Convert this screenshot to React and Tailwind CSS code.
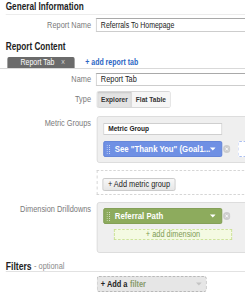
import React from "react";

function Grip() {
  return (
    <svg width="5" height="9" viewBox="0 0 5 9" className="shrink-0">
      {[0, 2, 4, 6, 8].map((y) => (
        <g key={y}>
          <rect x="0" y={y} width="1.2" height="1" fill="rgba(255,255,255,0.65)" />
          <rect x="3" y={y} width="1.2" height="1" fill="rgba(255,255,255,0.65)" />
        </g>
      ))}
    </svg>
  );
}

function Caret({ color = "#fff" }) {
  return (
    <svg width="7" height="4" viewBox="0 0 7 4" className="shrink-0">
      <path d="M0 0.5 L7 0.5 L3.5 3.5 Z" fill={color} />
    </svg>
  );
}

function RemoveDot() {
  return (
    <svg width="9" height="8" viewBox="0 0 9 8" className="shrink-0">
      <ellipse cx="4.5" cy="4" rx="4.5" ry="4" fill="#cdcdcd" />
      <path d="M3 2.6 L6 5.4 M6 2.6 L3 5.4" stroke="#fff" strokeWidth="1" />
    </svg>
  );
}

export default function App() {
  return (
    <div className="w-[245px] h-[300px] overflow-hidden bg-white">
      <div className="w-[299px] origin-top-left scale-x-[0.82] font-['Liberation_Sans',Arial,sans-serif] text-[9px] leading-none text-[#333]">
        {/* General Information */}
        <div className="h-[15px] ml-[7px] flex items-center border-b border-[#ececec]">
          <span className="font-bold text-[10px] text-[#222] whitespace-nowrap">General Information</span>
        </div>

        <div className="mt-[3px] flex items-center h-[14px]">
          <div className="w-[111px] shrink-0 text-right text-[#7a7a7a] whitespace-nowrap">Report Name</div>
          <div className="ml-[6px] w-[200px] shrink-0 h-[14px] border border-[#cdcdcd] border-t-[#a9a9a9] bg-white flex items-center pl-[5px] text-[8.5px] text-[#222] whitespace-nowrap">
            Referrals To Homepage
          </div>
        </div>

        {/* Report Content */}
        <div className="mt-[9px] h-[12px] ml-[7px] flex items-center">
          <span className="font-bold text-[10px] text-[#222] whitespace-nowrap">Report Content</span>
        </div>

        <div className="mt-[4px] flex items-end border-b border-[#d9d9d9] pl-[9px]">
          <div className="w-[82px] h-[11px] bg-[#6b6b6b] rounded-t-[2px] flex items-center text-white text-[8.5px] pl-[16px] whitespace-nowrap">
            <span>Report Tab</span>
            <span className="ml-[8px] text-[#d0d0d0]">×</span>
          </div>
          <div className="ml-[13px] h-[11px] flex items-center text-[#2a66c4] font-bold text-[8.5px] whitespace-nowrap">
            + add report tab
          </div>
        </div>

        {/* Name */}
        <div className="mt-[4px] flex items-center h-[13px]">
          <div className="w-[111px] shrink-0 text-right text-[#7a7a7a]">Name</div>
          <div className="ml-[6px] w-[200px] shrink-0 h-[13px] border border-[#cdcdcd] border-t-[#a9a9a9] bg-white flex items-center pl-[5px] text-[#222] whitespace-nowrap">
            Report Tab
          </div>
        </div>

        {/* Type */}
        <div className="mt-[5px] flex items-center h-[17px]">
          <div className="w-[111px] shrink-0 text-right text-[#7a7a7a]">Type</div>
          <div className="ml-[7px] flex h-[17px] border border-[#d4d4d4] rounded-[2px] font-bold text-[8px] text-[#333] whitespace-nowrap">
            <div className="w-[41px] flex items-center justify-center bg-[#e3e3e3] shadow-[inset_0_1px_2px_rgba(0,0,0,0.12)]">Explorer</div>
            <div className="w-[47px] flex items-center justify-center bg-[#f6f6f6] border-l border-[#d4d4d4]">Flat Table</div>
          </div>
        </div>

        {/* Metric Groups */}
        <div className="mt-[8px] flex items-start">
          <div className="w-[111px] shrink-0 text-right text-[#7a7a7a] pt-[3px] whitespace-nowrap">Metric Groups</div>
          <div className="ml-[7px] w-[200px] shrink-0 flex flex-col gap-[7px]">
            <div className="h-[47px] rounded-[3px] border border-[#dadada] bg-[#efefef] pl-[7px] pt-[6px]">
              <div className="w-[145px] h-[12px] bg-white border border-[#cfcfcf] flex items-center pl-[5px] font-bold text-[8px] text-[#222] whitespace-nowrap">
                Metric Group
              </div>
              <div className="mt-[6px] flex items-center">
                <div className="w-[145px] h-[16px] rounded-[2px] bg-[#6f90e4] border border-[#5f80d6] flex items-center pl-[3px] pr-[7px] text-white font-bold text-[9.5px] whitespace-nowrap">
                  <Grip />
                  <span className="ml-[5px] flex-1">See "Thank You" (Goal1...</span>
                  <Caret />
                </div>
                <div className="ml-[1px]"><RemoveDot /></div>
                <div className="ml-[9px] w-[40px] h-[16px] border border-dashed border-[#a9bdf0] bg-white rounded-[2px]" />
              </div>
            </div>
            <div className="h-[25px] border border-dashed border-[#d2d2d2] border-r-0 pl-[6px] pt-[7px]">
              <div className="w-[89px] h-[13px] rounded-[2px] border border-[#c6c6c6] bg-gradient-to-b from-[#f8f8f8] to-[#e6e6e6] flex items-center justify-center text-[#222] whitespace-nowrap">
                + Add metric group
              </div>
            </div>
          </div>
        </div>

        {/* Dimension Drilldowns */}
        <div className="mt-[7px] flex items-start">
          <div className="w-[111px] shrink-0 text-right text-[#7a7a7a] pt-[3px] whitespace-nowrap">Dimension Drilldowns</div>
          <div className="ml-[7px] w-[200px] shrink-0 h-[51px] rounded-[3px] border border-[#dadada] bg-[#efefef] pl-[7px] pt-[5px]">
            <div className="flex items-center">
              <div className="w-[145px] h-[16px] rounded-[2px] bg-[#8dab5d] border border-[#7e9b4f] flex items-center pl-[3px] pr-[7px] text-white font-bold text-[9.5px] whitespace-nowrap">
                <Grip />
                <span className="ml-[5px] flex-1">Referral Path</span>
                <Caret />
              </div>
              <div className="ml-[1px]"><RemoveDot /></div>
            </div>
            <div className="mt-[5px] ml-[13px] w-[144px] h-[11px] border border-dashed border-[#c9e093] bg-[#f4fae2] flex items-center justify-center text-[#7f9a55] whitespace-nowrap">
              + add dimension
            </div>
          </div>
        </div>

        {/* Filters */}
        <div className="mt-[8px] ml-[7px] h-[11px] flex items-center border-b border-[#e2e2e2] whitespace-nowrap">
          <span className="font-bold text-[10.5px] text-[#222]">Filters</span>
          <span className="ml-[3px] text-[#8a8a8a]">- optional</span>
        </div>
        <div className="mt-[4px] ml-[118px] w-[134px] h-[16px] rounded-[3px] border border-dashed border-[#b9b9b9] bg-[#e6e6e6] flex items-center pl-[4px] pr-[5px] whitespace-nowrap">
          <span className="font-bold text-[#222]">+ Add a</span>
          <span className="ml-[3px] font-bold text-[#869a6a] flex-1">filter</span>
          <Caret color="#c4c4c4" />
        </div>
      </div>
    </div>
  );
}
